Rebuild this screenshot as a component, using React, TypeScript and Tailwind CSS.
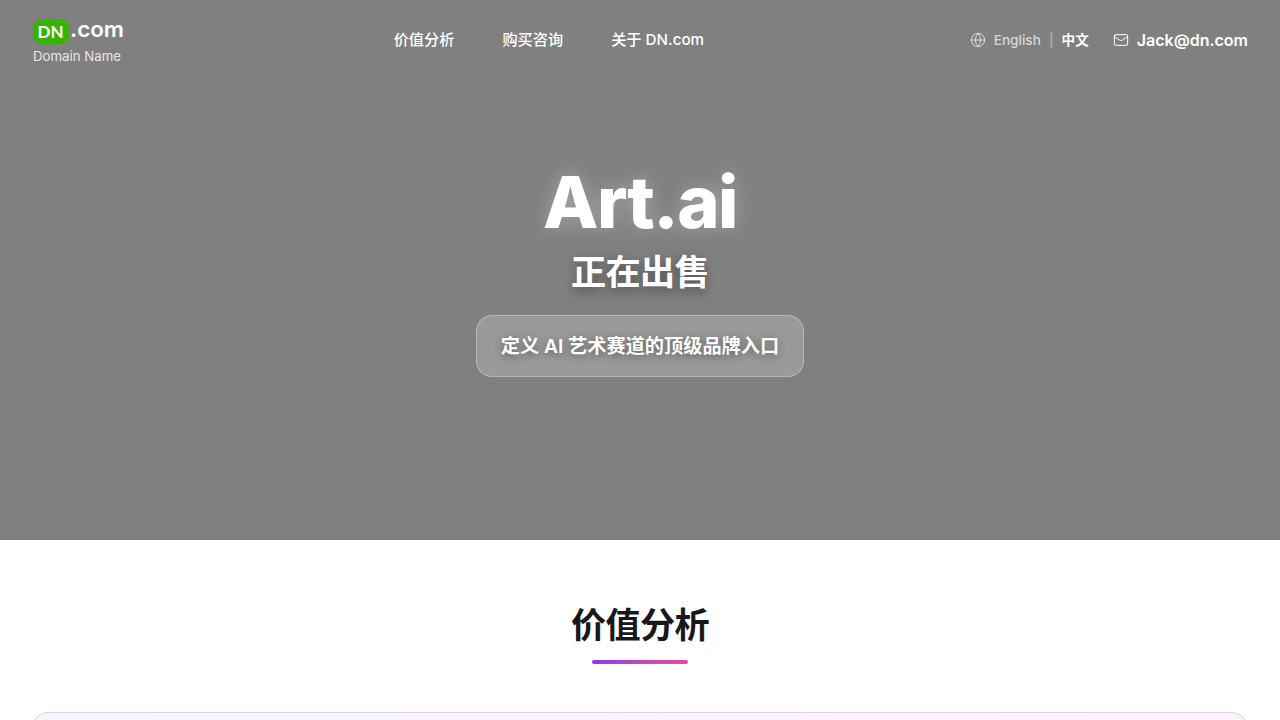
import { Globe, Mail } from "lucide-react";

const links = ["价值分析", "购买咨询", "关于 DN.com"];

function Logo() {
  return (
    <svg width="96" height="48" viewBox="0 0 96 48" className="block" fontFamily="Inter, sans-serif">
      <rect x="1" y="3" width="36" height="25.5" rx="9" fill="#37b400" />
      <text x="5.5" y="21.5" fontSize="17" fontWeight="700" fill="#fff" textLength="26" lengthAdjust="spacingAndGlyphs" fontFamily="Lato, sans-serif">DN</text>
      <text x="38" y="21.3" fontSize="22" fontWeight="600" fill="#fff" textLength="54" lengthAdjust="spacingAndGlyphs">.com</text>
      <text x="1" y="45" fontSize="13" fontWeight="400" fill="#e8e8e8" textLength="88" lengthAdjust="spacingAndGlyphs">Domain Name</text>
    </svg>
  );
}

export default function App() {
  return (
    <div className="h-[720px] overflow-hidden bg-white font-['Inter','Noto_Sans_CJK_SC',sans-serif]">
      <section className="flex h-[540px] flex-col bg-[#808080] text-white">
        <header className="flex h-20 shrink-0 items-center justify-between px-8">
          <Logo />
          <nav className="flex gap-12 text-[15.2px] leading-6 font-medium">
            {links.map((l) => (
              <a key={l}>{l}</a>
            ))}
          </nav>
          <div className="flex items-center gap-6">
            <div className="flex items-center gap-2 text-[13.6px] leading-5 font-medium">
              <Globe size={16} strokeWidth={1.5} className="text-white/70" />
              <span className="text-white/70">English</span>
              <span className="text-white/40">|</span>
              <span className="font-semibold">中文</span>
            </div>
            <div className="flex items-center gap-2 text-base font-semibold">
              <Mail size={16} strokeWidth={1.5} />
              <span>Jack@dn.com</span>
            </div>
          </div>
        </header>
        <div className="flex flex-col items-center pt-[82px]">
          <h1 className="text-[72px] leading-[79px] font-extrabold tracking-[-0.02em] [text-shadow:0_0_20px_rgba(255,255,255,0.3)]">Art.ai</h1>
          <h2 className="mt-2 text-[35.2px] leading-[46px] font-bold tracking-[-0.02em] [text-shadow:0_4px_12px_rgba(0,0,0,0.4)]">正在出售</h2>
          <div className="mt-5 flex h-[62px] items-center rounded-2xl border border-white/30 bg-white/20 px-6 text-[19.2px] leading-7 font-semibold [text-shadow:0_2px_8px_rgba(0,0,0,0.4)]">
            定义 AI 艺术赛道的顶级品牌入口
          </div>
        </div>
      </section>
      <section className="flex flex-col items-center px-8 pt-[60px]">
        <h2 className="text-[35.2px] leading-[50px] font-bold tracking-[-0.02em] text-[#18181b]">价值分析</h2>
        <div className="mt-[10px] h-1 w-24 rounded-full bg-linear-to-r from-[#9333ea] to-[#ec4899]" />
        <div className="mt-12 h-40 w-full rounded-2xl border border-[#dccfe8] bg-linear-to-r from-[#faf5ff] to-[#fdf2f8]" />
      </section>
    </div>
  );
}
